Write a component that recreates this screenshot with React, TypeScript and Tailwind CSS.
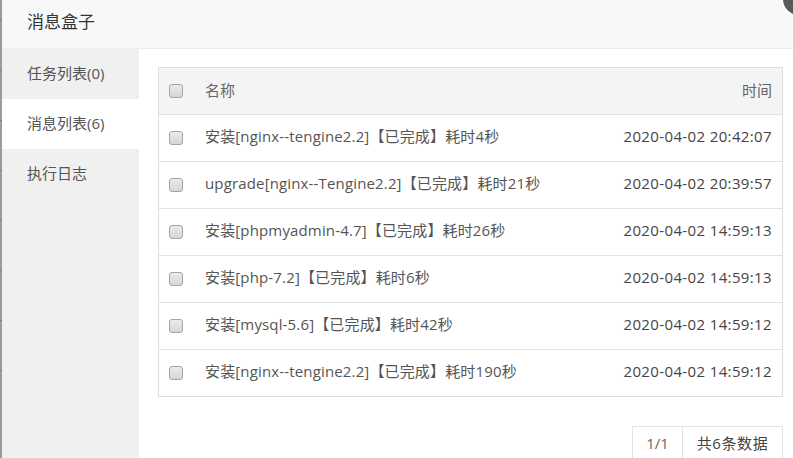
import React from "react";

const rows = [
  { name: "安装[nginx--tengine2.2]【已完成】耗时4秒", time: "2020-04-02 20:42:07" },
  { name: "upgrade[nginx--Tengine2.2]【已完成】耗时21秒", time: "2020-04-02 20:39:57" },
  { name: "安装[phpmyadmin-4.7]【已完成】耗时26秒", time: "2020-04-02 14:59:13" },
  { name: "安装[php-7.2]【已完成】耗时6秒", time: "2020-04-02 14:59:13" },
  { name: "安装[mysql-5.6]【已完成】耗时42秒", time: "2020-04-02 14:59:12" },
  { name: "安装[nginx--tengine2.2]【已完成】耗时190秒", time: "2020-04-02 14:59:12" },
];

function Check() {
  return (
    <span className="inline-block w-[14px] h-[14px] rounded-[3px] border border-[#a5a5a5] bg-gradient-to-b from-[#ebebeb] to-[#d6d6d6] shrink-0" />
  );
}

export default function App() {
  const font = { fontFamily: '"Open Sans", "Noto Sans CJK SC", sans-serif' };
  return (
    <div className="relative w-[793px] h-[458px] overflow-hidden flex bg-white text-[#555]" style={font}>
      <div className="w-[2px] h-full bg-[#9b9b9b] flex flex-col shrink-0">
        {[0, 1, 2, 3, 4, 5, 6, 7, 8].map((i) => (
          <div key={i} className="h-[50px] shrink-0 border-t border-[#7d7d7d] first:border-t-0 first:h-[20px]" />
        ))}
      </div>
      <div className="flex-1 flex flex-col min-w-0">
        <div className="h-[49px] shrink-0 bg-[#f8f8f8] border-b border-[#ececec] flex items-center pl-[25px] pb-[5px] text-[17px] text-[#333]">
          消息盒子
        </div>
        <div className="flex-1 flex min-h-0">
          <div className="w-[137px] shrink-0 bg-[#f0f0f0] flex flex-col text-[15px] text-[#555]">
            <div className="h-[50px] flex items-center pl-[25px] pb-[1px]">任务列表(0)</div>
            <div className="h-[50px] flex items-center pl-[25px] pb-[1px] bg-white">消息列表(6)</div>
            <div className="h-[50px] flex items-center pl-[25px] pb-[1px]">执行日志</div>
          </div>
          <div className="flex-1 flex flex-col pl-[19px] pr-[10px] pt-[18px]">
            <div className="border border-[#dedede] text-[15px]">
              <div className="h-[46px] bg-[#f4f4f4] flex items-center pl-[10px] pr-[10px]">
                <Check />
                <span className="ml-[22px] text-[#666] pb-[1px]">名称</span>
                <span className="ml-auto text-[#666] pb-[1px]">时间</span>
              </div>
              {rows.map((r, i) => (
                <div key={i} className="h-[47px] border-t border-[#e2e2e2] flex items-center pl-[10px] pr-[10px]">
                  <Check />
                  <span className="ml-[22px] text-[#555] tracking-[0.15px] pb-[3px]">{r.name}</span>
                  <span className="ml-auto text-[#444] tracking-[0.37px] pb-[3px]">{r.time}</span>
                </div>
              ))}
            </div>
            <div className="flex justify-end mt-[29px]">
              <div className="flex border border-[#e2e2e2] h-[40px] text-[15px] text-[#444]">
                <div className="w-[50px] flex items-center justify-center border-r border-[#e2e2e2] text-[#666] pb-[6px]">1/1</div>
                <div className="w-[99px] flex items-center justify-center tracking-[0.6px] pb-[6px]">共6条数据</div>
              </div>
            </div>
          </div>
        </div>
      </div>
      <div className="absolute left-[781px] top-[-19px] w-[36px] h-[36px] rounded-full bg-[#595959] border-2 border-white" />
    </div>
  );
}
